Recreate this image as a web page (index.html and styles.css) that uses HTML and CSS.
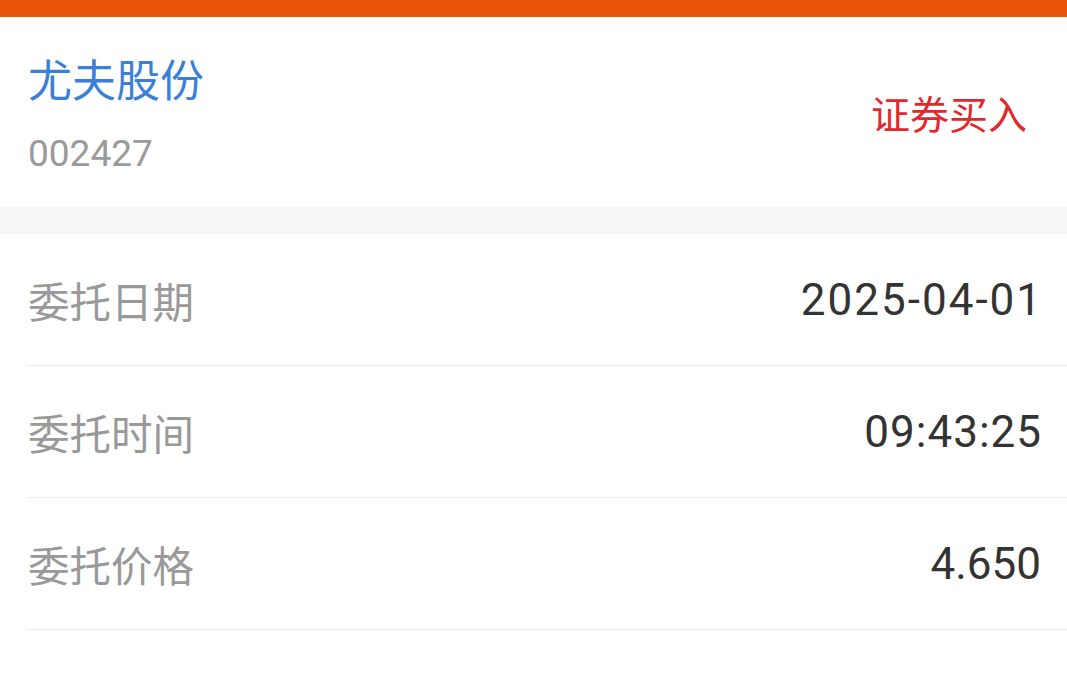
FILE: index.html
```html
<!DOCTYPE html>
<html lang="zh-CN">
<head>
    <meta charset="UTF-8">
    <meta name="viewport" content="width=device-width, initial-scale=1.0">
    <title>委托详情</title>
    <link rel="stylesheet" href="styles.css">
</head>
<body>
    <div class="top-bar"></div>

    <div class="stock-header">
        <div class="stock-info">
            <div class="stock-name">尤夫股份</div>
            <div class="stock-code">002427</div>
        </div>
        <div class="trade-type">证券买入</div>
    </div>

    <div class="gap"></div>

    <div class="detail-list">
        <div class="detail-row">
            <span class="detail-label">委托日期</span>
            <span class="detail-value date">2025-04-01</span>
        </div>
        <div class="detail-row">
            <span class="detail-label">委托时间</span>
            <span class="detail-value time">09:43:25</span>
        </div>
        <div class="detail-row">
            <span class="detail-label">委托价格</span>
            <span class="detail-value">4.650</span>
        </div>
    </div>
</body>
</html>
```

FILE: styles.css
```css
body {
    margin: 0;
    background-color: #fff;
    font-family: Roboto, "Noto Sans CJK SC", sans-serif;
}

.top-bar {
    height: 17px;
    background-color: #e8550a;
}

.stock-header {
    height: 190px;
    box-sizing: border-box;
    display: flex;
    justify-content: space-between;
    align-items: center;
    padding: 0 40px 0 28px;
}

.stock-info {
    align-self: flex-start;
    padding-top: 35px;
}

.stock-name {
    font-size: 44px;
    line-height: 60px;
    color: #3a80d8;
}

.stock-code {
    font-size: 37px;
    line-height: 60px;
    color: #9a9a9a;
    margin-top: 12px;
}

.trade-type {
    font-size: 39px;
    color: #e0282e;
}

.gap {
    height: 27px;
    background-color: #f5f6f8;
}

.detail-row {
    height: 132px;
    box-sizing: border-box;
    display: flex;
    justify-content: space-between;
    align-items: center;
    padding: 0 26px 0 28px;
    position: relative;
}

.detail-row::after {
    content: "";
    position: absolute;
    left: 27px;
    right: 0;
    bottom: 0;
    height: 1px;
    background-color: #ececec;
}

.detail-label {
    font-size: 41.5px;
    color: #999;
}

.detail-value {
    font-size: 44px;
    color: #333;
}

.detail-value.date {
    letter-spacing: 2px;
    margin-right: -2px;
}

.detail-value.time {
    letter-spacing: 1px;
    margin-right: -1px;
}
```
